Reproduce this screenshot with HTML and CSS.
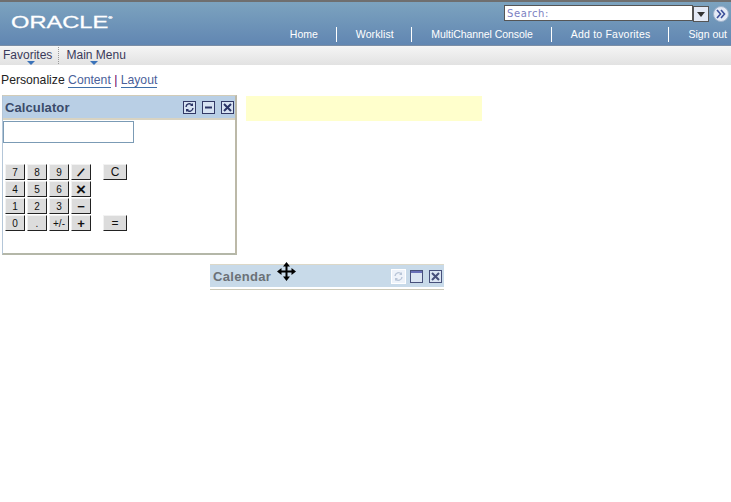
FILE: index.html
```html
<!DOCTYPE html>
<html lang="en">
<head>
<meta charset="utf-8">
<title>Oracle PeopleSoft</title>
<link rel="stylesheet" href="styles.css">
</head>
<body>
<header class="banner">
  <div class="logo">ORACLE<sup class="reg">®</sup></div>
  <div class="banner-right">
    <div class="search">
      <div class="search-box">Search:</div>
      <div class="search-drop"><svg width="8" height="5" viewBox="0 0 8 5"><path d="M0 0h8L4 5z" fill="#333"/></svg></div>
      <div class="search-go"><svg width="16" height="16" viewBox="0 0 16 16"><circle cx="8" cy="8" r="7.5" fill="#e4eaf6" stroke="#9fb3cc"/><path d="M4 4l3.5 4L4 12M8 4l3.500 4L8 12" fill="none" stroke="#3c4f9a" stroke-width="1.6"/></svg></div>
    </div>
    <nav class="top-nav">
      <a>Home</a>
      <a class="nav-work">Worklist</a>
      <a class="nav-multi">MultiChannel Console</a>
      <a class="nav-fav">Add to Favorites</a>
      <a class="nav-last">Sign out</a>
    </nav>
  </div>
</header>
<div class="menubar">
  <div class="menu-item menu-fav">Favorites<span class="caret"></span></div>
  <div class="menu-item menu-main">Main Menu<span class="caret"></span></div>
</div>
<div class="personalize">Personalize <a>Content</a> <span class="sep">|</span> <a>Layout</a></div>
<main class="content">
  <section class="pagelet calc">
    <div class="pagelet-head">
      <h2 class="pagelet-title">Calculator</h2>
      <div class="tools">
        <svg class="tool" viewBox="0 0 13 13"><rect x=".5" y=".5" width="12" height="12" fill="#d7e3f2" stroke="#333a66"/><path d="M3 6a3.4 3.4 0 0 1 6-2M10 7a3.4 3.4 0 0 1-6 2" fill="none" stroke="#2b3566" stroke-width="1.4"/><path d="M10 2v3H7zM3 11V8h3z" fill="#2b3566"/></svg>
        <svg class="tool" viewBox="0 0 13 13"><rect x=".5" y=".5" width="12" height="12" fill="#d7e3f2" stroke="#333a66"/><path d="M3 6.500h7" stroke="#2b3566" stroke-width="2"/></svg>
        <svg class="tool" viewBox="0 0 13 13"><rect x=".5" y=".5" width="12" height="12" fill="#d7e3f2" stroke="#333a66"/><path d="M3 3l7 7M10 3l-7 7" stroke="#2b3566" stroke-width="2"/></svg>
      </div>
    </div>
    <div class="calc-body">
      <div class="calc-display"></div>
      <div class="keys">
        <div class="key-row"><button class="key">7</button><button class="key">8</button><button class="key">9</button><button class="key key-op"><span class="slash">/</span></button><button class="key key-wide">C</button></div>
        <div class="key-row"><button class="key">4</button><button class="key">5</button><button class="key">6</button><button class="key key-op key-times">×</button></div>
        <div class="key-row"><button class="key">1</button><button class="key">2</button><button class="key">3</button><button class="key key-op">−</button></div>
        <div class="key-row"><button class="key">0</button><button class="key">.</button><button class="key">+/-</button><button class="key key-op">+</button><button class="key key-wide">=</button></div>
      </div>
    </div>
  </section>
  <div class="notice"></div>
</main>
<section class="pagelet dragged">
  <div class="pagelet-head">
    <h2 class="pagelet-title">Calendar</h2>
    <div class="tools">
      <svg class="tool tool-off" viewBox="0 0 15 15"><rect x=".5" y=".5" width="14" height="14" fill="#eef3fa" stroke="#fff"/><path d="M4 7a3.600 3.600 0 0 1 6.400-2M11 8a3.600 3.600 0 0 1-6.400 2" fill="none" stroke="#b9c6d8" stroke-width="1.4"/><path d="M11 3v3H8zM4 12V9h3z" fill="#b9c6d8"/></svg>
      <svg class="tool" viewBox="0 0 13 13"><rect x=".5" y=".5" width="12" height="12" fill="#dbe5f2" stroke="#47507a"/><path d="M1 2h11" stroke="#6a70b8" stroke-width="2"/></svg>
      <svg class="tool" viewBox="0 0 13 13"><rect x=".5" y=".5" width="12" height="12" fill="#dbe5f2" stroke="#47507a"/><path d="M3 3l7 7M10 3l-7 7" stroke="#47507a" stroke-width="2"/></svg>
    </div>
  </div>
</section>
<svg class="move-cursor" width="19" height="19" viewBox="0 0 19 19"><path d="M9.500 0L13 4.500H10.500V8.500H14.500V6L19 9.500 14.500 13V10.500H10.500V14.500H13L9.500 19 6 14.500H8.500V10.500H4.500V13L0 9.500 4.500 6V8.500H8.500V4.500H6z" fill="#000"/></svg>
</body>
</html>
```
FILE: styles.css
```css
* { box-sizing: border-box; }
html, body { margin: 0; padding: 0; }
body {
  position: relative;
  width: 731px;
  height: 502px;
  overflow: hidden;
  background: #fff;
  font-family: "Liberation Sans", Arial, sans-serif;
  font-size: 12px;
  color: #333;
}
.banner {
  height: 46px;
  border-top: 2px solid #6f6f6f;
  border-bottom: 1px solid #7b8ea6;
  background: linear-gradient(#7ca3bf, #6186b2);
  display: flex;
  justify-content: space-between;
}
.logo {
  margin: 12px 0 0 11px;
  font-size: 17px;
  line-height: 18px;
  color: #fff;
  white-space: nowrap;
  transform: scaleX(1.39);
  transform-origin: 0 0;
  -webkit-text-stroke: 0.3px #fff;
}
.reg { font-size: 4px; vertical-align: 9px; line-height: 0; }
.banner-right { display: flex; flex-direction: column; align-items: flex-end; }
.search { display: flex; align-items: flex-start; margin-top: 3px; height: 19px; padding-right: 2px; }
.search-box {
  width: 189px;
  height: 16px;
  border: 1px solid #555;
  background: #fff;
  color: #7d7fc2;
  font-family: "DejaVu Sans", sans-serif;
  font-size: 10px;
  line-height: 15px;
  padding-left: 2px;
  letter-spacing: 0.6px;
}
.search-drop {
  width: 16px;
  height: 16px;
  margin-top: 1px;
  border: 1px solid #555;
  background: #e4eaf6;
  display: flex;
  align-items: center;
  justify-content: center;
}
.search-go { width: 16px; height: 16px; margin: 1px 0 0 4px; }
.top-nav { display: flex; justify-content: flex-end; margin-top: 3px; height: 15px; }
.top-nav a {
  color: #fff;
  font-size: 10.500px;
  line-height: 15px;
  white-space: nowrap;
  flex: none;
  padding: 0 18px 0 19px;
  border-right: 1px solid #fff;
}
.top-nav .nav-work { padding-right: 17.500px; letter-spacing: 0.1px; }
.top-nav .nav-multi { padding-right: 18px; letter-spacing: -0.06px; }
.top-nav .nav-fav { padding: 0 18px 0 19px; letter-spacing: 0.2px; }
.top-nav .nav-last { border-right: 0; padding-right: 4px; }
.menubar {
  height: 19px;
  display: flex;
  background: linear-gradient(#f4f4f4, #e2e2e2);
  border-top: 1px solid #f6f6f6;
}
.menu-item {
  position: relative;
  color: #3a3a5a;
  font-size: 12px;
  line-height: 14px;
  padding-top: 1px;
  white-space: nowrap;
}
.menu-fav { padding-left: 3px; width: 59px; border-right: 1px dotted #999; height: 17px; }
.menu-main { padding-left: 7.500px; }
.caret {
  position: absolute;
  top: 14px;
  left: 50%;
  margin-left: -2px;
  border: 4px solid transparent;
  border-top: 4px solid #3b73b9;
  border-bottom: 0;
}
.personalize { padding: 7px 0 0 1px; height: 30px; font-size: 12.200px; line-height: 16px; color: #222; white-space: nowrap; }
.personalize a { color: #4a5f9a; border-bottom: 1px solid #3f6fa8; }
.sep { color: #660066; }
.content { display: flex; align-items: flex-start; padding-left: 2px; }
.pagelet { width: 235px; background: #fff; }
.calc { height: 160px; border-style: solid; border-width: 1px 2px 2px 1px; border-color: #d2ccb8 #bcb9a8 #b4b7a8 #b4c6d8; }
.pagelet-head {
  height: 24px;
  background: #b9cfe5;
  border-bottom: 2px solid #d8d3c2;
  display: flex;
  align-items: center;
  justify-content: space-between;
  padding: 0 1px 0 2px;
}
.pagelet-title { margin: 0; font-size: 13px; font-weight: bold; color: #3a4a6a; letter-spacing: 0.1px; }
.tools { display: flex; align-items: center; gap: 6px; }
.tool { width: 13px; height: 13px; display: block; }
.tool-off { width: 15px; height: 15px; margin-right: -2px; }
.calc-body { padding: 1px 0 0 0; }
.calc-display { width: 131px; height: 22px; border: 1px solid #7b9bb5; background: #fff; }
.keys { display: flex; flex-direction: column; gap: 1px; margin: 21px 0 0 2px; }
.key-row { display: flex; gap: 2px; height: 16px; }
.key {
  margin: 0;
  padding: 0;
  flex: none;
  width: 20px;
  height: 16px;
  background: #dcdcdc;
  border: 1px solid;
  border-color: #f2f2f2 #222 #222 #f2f2f2;
  color: #111;
  font-family: "Liberation Sans", Arial, sans-serif;
  font-size: 10px;
  line-height: 13px;
}
.key-op { font-size: 13px; font-weight: bold; }
.key-times { font-size: 17px; }
.slash { display: inline-block; transform: rotate(30deg); }
.key-wide { width: 24px; margin-left: 10px; font-size: 12px; }
.dragged {
  position: absolute;
  left: 210px;
  top: 264px;
  width: 234px;
  height: 26px;
  border-top: 1px solid #dcd8c8;
  border-bottom: 1px solid #ccc9b8;
}
.dragged .pagelet-head { height: 22px; background: #c8dae9; border-bottom: 0; padding: 0 2px 0 3px; }
.dragged .pagelet-title { color: #6b7177; letter-spacing: 0.3px; }
.notice { width: 236px; height: 25px; margin: 1px 0 0 9px; background: #ffffcc; }
.move-cursor { position: absolute; left: 277px; top: 262px; }
```
